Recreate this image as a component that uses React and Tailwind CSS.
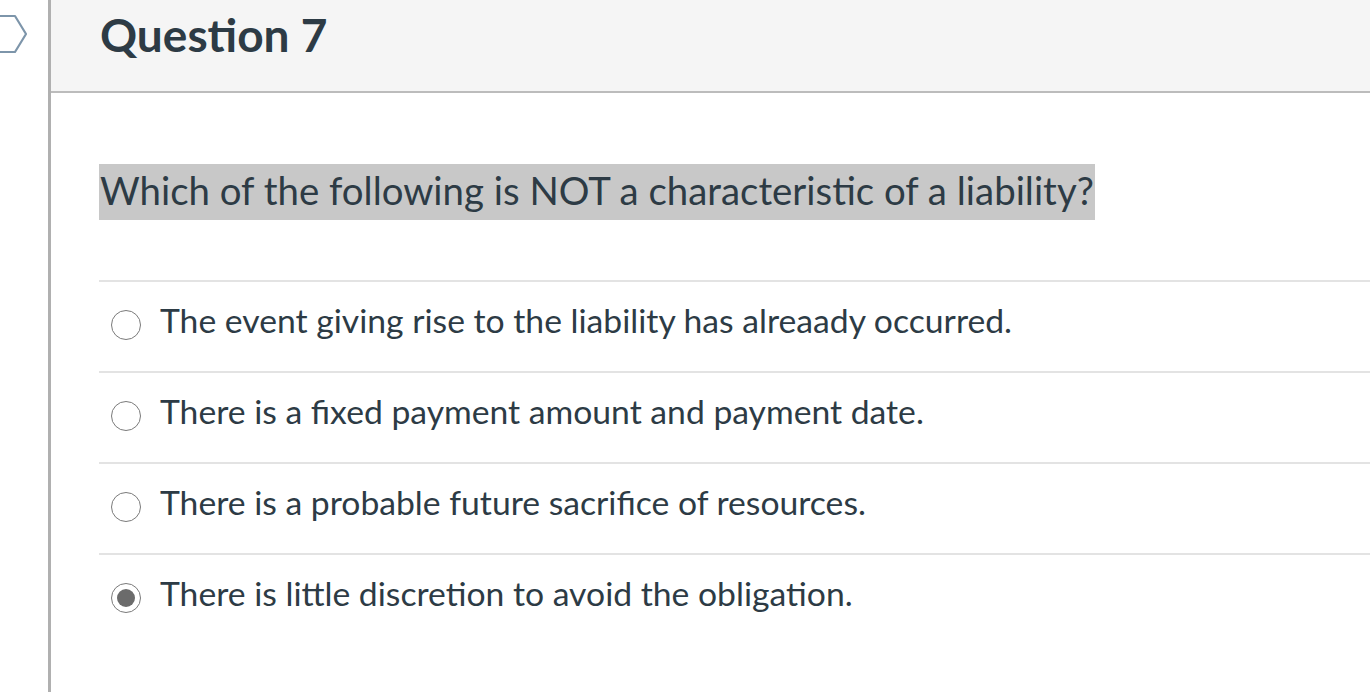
import React from "react";

const answers = [
  { text: "The event giving rise to the liability has alreaady occurred.", checked: false },
  { text: "There is a fixed payment amount and payment date.", checked: false },
  { text: "There is a probable future sacrifice of resources.", checked: false },
  { text: "There is little discretion to avoid the obligation.", checked: true },
];

function Radio({ checked }) {
  return (
    <span className="-mt-[3px] flex h-[30px] w-[30px] shrink-0 items-center justify-center rounded-full border-[1.5px] border-[#7a7a7a] bg-white">
      {checked && <span className="h-[18px] w-[18px] rounded-full bg-[#6b6b6b]" />}
    </span>
  );
}

export default function App() {
  return (
    <div
      className="flex h-[692px] w-full overflow-hidden bg-white text-[#2d3b45]"
      style={{ fontFamily: "Lato, 'Noto Sans', sans-serif" }}
    >
      <div className="relative w-[48px] shrink-0">
        <svg className="absolute left-0 top-0" width="40" height="70" viewBox="0 0 40 70">
          <path d="M-10 16 H15 L26 34 L15 52 H-10" fill="none" stroke="#7d95aa" strokeWidth="2.2" strokeLinejoin="round" />
        </svg>
      </div>
      <div className="flex-1 border-l-[3px] border-[#b0b0b0]">
        <header className="flex h-[93px] items-center border-b-2 border-[#bcbcbc] bg-[#f5f5f5] pl-[49px]">
          <h2 className="-mt-[22px] text-[46px] font-bold leading-none">Question 7</h2>
        </header>
        <div className="pl-[48px]">
          <div className="pt-[71px]">
            <span className="inline-block bg-[#c8c8c8] px-[1px] pb-[3px] text-[38.4px] leading-[53px]">
              Which of the following is NOT a characteristic of a liability?
            </span>
          </div>
          <div className="mt-[60px]">
            {answers.map((a, i) => (
              <div
                key={i}
                className="flex h-[91px] items-center border-t-2 border-[#e3e3e3] pl-[12px]"
              >
                <Radio checked={a.checked} />
                <span className="ml-[19px] -mt-[12px] text-[33.7px] leading-none">{a.text}</span>
              </div>
            ))}
          </div>
        </div>
      </div>
    </div>
  );
}
